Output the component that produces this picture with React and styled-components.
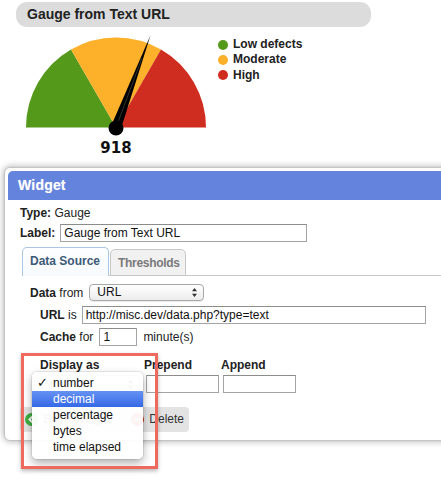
import React from 'react';
import styled, { createGlobalStyle } from 'styled-components';

const GlobalStyle = createGlobalStyle`
  html, body { margin: 0; padding: 0; background: #fff; overflow: hidden; }
  body { font-family: "Liberation Sans", Arial, sans-serif; font-size: 12px; color: #222; }
  * { box-sizing: border-box; }
`;

const Page = styled.div`
  position: relative;
  width: 441px;
  height: 482px;
  overflow: hidden;
`;

const Top = styled.section`
  padding-top: 2px;
`;

const TitlePill = styled.div`
  margin-left: 16px;
  width: 355px;
  height: 25px;
  border-radius: 11px;
  background: #dcdcdc;
  padding-left: 11px;
  font: bold 14px/25px "Liberation Sans", Arial, sans-serif;
  color: #222;
`;

const GaugeRow = styled.div`
  display: flex;
  align-items: flex-start;
`;

const GaugeSvg = styled.svg`
  display: block;
  flex: none;
`;

const Legend = styled.ul`
  list-style: none;
  margin: 10px 0 0 2px;
  padding: 0;
`;

const LegendItem = styled.li`
  display: flex;
  align-items: center;
  gap: 5px;
  height: 15.3px;
  font: bold 12px/15px "Liberation Sans", Arial, sans-serif;
  color: #222;
`;

const Dot = styled.span`
  width: 10px;
  height: 10px;
  border-radius: 50%;
  background: ${p => p.$color};
  flex: none;
`;

const Panel = styled.section`
  margin: 10px 0 0 4px;
  width: 470px;
  height: 274px;
  background: #fff;
  border: 1px solid #c4c4c4;
  border-radius: 6px;
  padding: 3px;
  box-shadow: 0 0 7px rgba(0, 0, 0, 0.35);
`;

const PanelHeader = styled.h2`
  margin: 0;
  height: 29px;
  background: #6383dc;
  border-radius: 5px 5px 0 0;
  padding-left: 10px;
  color: #fff;
  font: bold 14px/29px "Liberation Sans", Arial, sans-serif;
  letter-spacing: 0.2px;
  text-shadow: 0 0 1px rgba(255, 255, 255, 0.4);
`;

const PanelBody = styled.div`
  padding: 5px 0 0 12px;
`;

const Line = styled.div`
  display: flex;
  align-items: center;
  gap: ${p => p.$gap ?? 5}px;
  height: ${p => p.$h ?? 16}px;
  margin-top: ${p => p.$mt ?? 0}px;
  padding-left: ${p => p.$indent ?? 0}px;
  line-height: 16px;
  white-space: nowrap;
`;

const B = styled.b`
  font-weight: bold;
  color: #222;
`;

const TextInput = styled.div`
  width: ${p => p.$w}px;
  height: 18px;
  border: 1px solid #a4a4a4;
  border-top-color: #8c8c8c;
  background: #fff;
  padding-left: 3px;
  font: 12px/16px "Liberation Sans", Arial, sans-serif;
  color: #111;
  margin-left: ${p => p.$ml ?? 0}px;
  flex: none;
`;

const SelectBox = styled.div`
  position: relative;
  width: ${p => p.$w}px;
  height: ${p => p.$h ?? 17}px;
  margin-left: ${p => p.$ml ?? 0}px;
  border: 1px solid #a8a8a8;
  border-radius: 4px;
  background: linear-gradient(#ffffff, #ececec);
  box-shadow: 0 1px 1px rgba(0, 0, 0, 0.08);
  padding-left: 7px;
  font: 12px/15px "Liberation Sans", Arial, sans-serif;
  color: #111;
  flex: none;
`;

const Arrows = styled.svg`
  position: absolute;
  right: 6px;
  top: 50%;
  margin-top: -4.5px;
`;

const TabBar = styled.div`
  display: flex;
  align-items: flex-end;
  margin: 4px 0 0 2px;
  height: 29px;
  border-bottom: 1px solid #c8c8c8;
`;

const Tab = styled.div`
  height: ${p => (p.$active ? 29 : 27)}px;
  margin-bottom: -1px;
  padding: 0 ${p => (p.$active ? 8 : 5)}px 0 7px;
  border: 1px solid ${p => (p.$active ? '#a9c6e4' : '#c8c8c8')};
  border-bottom: ${p => (p.$active ? 'none' : '1px solid #c8c8c8')};
  border-radius: 5px 5px 0 0;
  background: ${p => (p.$active ? 'linear-gradient(#fdfeff, #f7fafd)' : '#f1f1f1')};
  color: ${p => (p.$active ? '#3d5a78' : '#7a7a7a')};
  font: bold 12px/27px "Liberation Sans", Arial, sans-serif;
  letter-spacing: ${p => (p.$active ? 0 : -0.3)}px;
  margin-left: ${p => (p.$active ? 0 : 1)}px;
`;

const TabContent = styled.div`
  padding: 8px 0 0 10px;
`;

const DisplayGrid = styled.div`
  display: grid;
  grid-template-columns: 104px 77px 80px;
  grid-template-rows: 16px 18px;
  row-gap: 2px;
  margin-top: 11px;
  padding-left: 10px;
  line-height: 16px;
`;

const ButtonBar = styled.div`
  display: flex;
  justify-content: space-between;
  align-items: center;
  width: 169px;
  height: 25px;
  margin: 13.5px 0 0 0;
  padding: 0 5px;
  background: #e3e3e3;
  border-radius: 4px;
`;

const Button = styled.div`
  display: flex;
  align-items: center;
  gap: 5px;
  font: 12px/16px "Liberation Sans", Arial, sans-serif;
  color: #333;
`;

const Menu = styled.ul`
  position: absolute;
  left: 32px;
  top: 372px;
  width: 111px;
  margin: 0;
  padding: 3px 0 4px;
  list-style: none;
  background: rgba(255, 255, 255, 0.95);
  border-radius: 5px;
  box-shadow: 0 4px 10px rgba(0, 0, 0, 0.32), 0 0 0 1px rgba(0, 0, 0, 0.07);
`;

const MenuItem = styled.li`
  position: relative;
  height: 16px;
  padding-left: 21px;
  font: 12px/16px "Liberation Sans", Arial, sans-serif;
  color: ${p => (p.$hl ? '#fff' : '#111')};
  background: ${p => (p.$hl ? 'linear-gradient(#6592f1, #3568e6)' : 'transparent')};
`;

const Check = styled.span`
  position: absolute;
  left: 5px;
  top: 0;
  font: bold 13px/16px "DejaVu Sans", sans-serif;
  color: #111;
`;

const Highlight = styled.div`
  position: absolute;
  left: 21px;
  top: 353px;
  width: 137px;
  height: 116px;
  border: 3px solid #ee6a5e;
  box-shadow: 0 2px 4px rgba(0, 0, 0, 0.28);
  pointer-events: none;
`;

const cx = 116;
const cy = 100.5;
const r = 90;

function Gauge() {
  const pt = deg => {
    const a = (deg * Math.PI) / 180;
    return [cx + r * Math.cos(a), cy - r * Math.sin(a)];
  };
  const [gx, gy] = pt(120);
  const [yx, yy] = pt(60);
  return (
    <GaugeSvg width="216" height="130" viewBox="0 0 216 130">
      <path d={`M${cx} ${cy} L${cx - r} ${cy} A${r} ${r} 0 0 1 ${gx} ${gy} Z`} fill="#55991b" />
      <path d={`M${cx} ${cy} L${gx} ${gy} A${r} ${r} 0 0 1 ${yx} ${yy} Z`} fill="#fdb02a" />
      <path d={`M${cx} ${cy} L${yx} ${yy} A${r} ${r} 0 0 1 ${cx + r} ${cy} Z`} fill="#cf2d1f" />
      <polygon points="120.8,102.3 111.2,98.7 150.6,8" fill="#000" />
      <line x1="116" y1="100.5" x2="142" y2="31" stroke="#555" strokeWidth="0.6" />
      <circle cx="116" cy="101" r="7.5" fill="#000" />
      <text
        x="116"
        y="125.5"
        textAnchor="middle"
        fontFamily="DejaVu Sans, sans-serif"
        fontWeight="bold"
        fontSize="15"
        fill="#111"
      >
        918
      </text>
    </GaugeSvg>
  );
}

function UpDown() {
  return (
    <Arrows width="5" height="9" viewBox="0 0 5 9">
      <path d="M2.5 0 L5 3.2 L0 3.2 Z M2.5 9 L5 5.8 L0 5.8 Z" fill="#333" />
    </Arrows>
  );
}

function CircleIcon({ color, kind }) {
  return (
    <svg width="13" height="13" viewBox="0 0 13 13">
      <circle cx="6.5" cy="6.5" r="6.5" fill={color} />
      {kind === 'save' ? (
        <path d="M7.5 3.5 L4.5 6.5 L7.5 9.5" stroke="#fff" strokeWidth="2" fill="none" />
      ) : (
        <path d="M4 6.5 H9" stroke="#fff" strokeWidth="2" />
      )}
    </svg>
  );
}

export default function App() {
  return (
    <Page>
      <GlobalStyle />
      <Top>
        <TitlePill>Gauge from Text URL</TitlePill>
        <GaugeRow>
          <Gauge />
          <Legend>
            <LegendItem><Dot $color="#55991b" />Low defects</LegendItem>
            <LegendItem><Dot $color="#fdb02a" />Moderate</LegendItem>
            <LegendItem><Dot $color="#cf2d1f" />High</LegendItem>
          </Legend>
        </GaugeRow>
      </Top>

      <Panel>
        <PanelHeader>Widget</PanelHeader>
        <PanelBody>
          <Line><span><B>Type:</B> Gauge</span></Line>
          <Line $mt={2} $h={20}>
            <B>Label:</B>
            <TextInput $w={247}>Gauge from Text URL</TextInput>
          </Line>

          <TabBar>
            <Tab $active>Data Source</Tab>
            <Tab>Thresholds</Tab>
          </TabBar>

          <TabContent>
            <Line $h={17} $gap={6}>
              <span><B>Data</B> from</span>
              <SelectBox $w={115}>URL<UpDown /></SelectBox>
            </Line>
            <Line $h={18} $mt={5} $indent={10}>
              <span><B>URL</B> is</span>
              <TextInput $w={344}>http://misc.dev/data.php?type=text</TextInput>
            </Line>
            <Line $h={18} $mt={4} $indent={10} $gap={6}>
              <span><B>Cache</B> for</span>
              <TextInput $w={38}>1</TextInput>
              <span>minute(s)</span>
            </Line>

            <DisplayGrid>
              <B>Display as</B>
              <B>Prepend</B>
              <B>Append</B>
              <SelectBox $w={98} $h={18} $ml={2}>number<UpDown /></SelectBox>
              <TextInput $w={73} $ml={2} />
              <TextInput $w={73} $ml={2} />
            </DisplayGrid>
          </TabContent>

          <ButtonBar>
            <Button><CircleIcon color="#3fae3f" kind="save" />Save Widget</Button>
            <Button><CircleIcon color="#cc3322" kind="delete" />Delete</Button>
          </ButtonBar>
        </PanelBody>
      </Panel>

      <Menu>
        <MenuItem><Check>✓</Check>number</MenuItem>
        <MenuItem $hl>decimal</MenuItem>
        <MenuItem>percentage</MenuItem>
        <MenuItem>bytes</MenuItem>
        <MenuItem>time elapsed</MenuItem>
      </Menu>

      <Highlight />
    </Page>
  );
}
